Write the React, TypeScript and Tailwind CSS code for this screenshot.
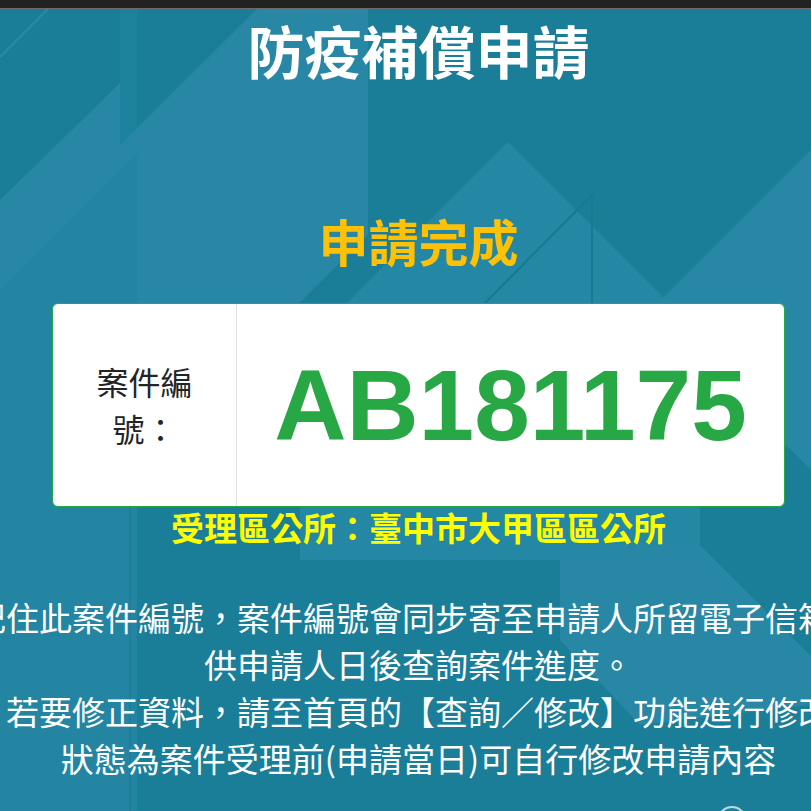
const cjk = { fontFamily: '"Noto Sans CJK TC", "Noto Sans", sans-serif' };

const notes = [
  "記住此案件編號，案件編號會同步寄至申請人所留電子信箱，",
  "供申請人日後查詢案件進度。",
  "若要修正資料，請至首頁的【查詢／修改】功能進行修改",
  "狀態為案件受理前(申請當日)可自行修改申請內容",
];

function Backdrop() {
  return (
    <svg className="absolute inset-0" width="811" height="811" viewBox="0 0 811 811">
      <rect width="811" height="811" fill="#1a7e99" />
      <polygon points="0,200 120,83 120,145 257,9 368,9 368,235 130,470 130,811 0,811" fill="#2887a5" />
      <polygon points="120,9 137,9 137,128 120,145" fill="#1d829e" />
      <polygon points="0,290 137,153 137,811 0,811" fill="#2385a2" />
      <polygon points="508,142 700,334 700,560 300,560 300,350" fill="#2487a4" />
      <polygon points="811,150 650,311 811,470" fill="#2887a5" />
      <polygon points="560,545 700,545 811,656 811,705 640,725 560,640" fill="#2887a5" />
      <line x1="0" y1="57" x2="48" y2="9" stroke="#2a8aa8" strokeWidth="2" />
      <line x1="592" y1="195" x2="592" y2="303" stroke="#1a7893" strokeWidth="2" />
      <line x1="592" y1="195" x2="485" y2="303" stroke="#1a7893" strokeWidth="2" />
      <line x1="130" y1="470" x2="130" y2="811" stroke="#1f7f9b" strokeWidth="2" />
    </svg>
  );
}

export default function App() {
  return (
    <div className="relative w-[811px] h-[811px] overflow-hidden bg-[#1a7e99]" style={cjk}>
      <Backdrop />

      {/* top bar */}
      <div className="relative h-[9px] bg-[#222222] border-b border-[#6b6b6b]"></div>

      <div className="relative w-[733px] ml-[52px] pt-[6px] flex flex-col items-center">
        <h1 className="text-[57px] leading-[68px] font-bold text-white">防疫補償申請</h1>

        <h2 className="mt-[127px] text-[50px] leading-[60px] font-bold text-[#ffc107]">申請完成</h2>

        {/* case number card */}
        <div className="mt-[33px] w-full h-[204px] flex bg-white rounded-[6px] border border-[#28a745] overflow-hidden">
          <div className="w-[184px] shrink-0 flex items-center justify-center border-r border-[#dee2e6] text-[32px] leading-[47px] text-[#212529] text-center">
            案件編
            <br />
            號：
          </div>
          <div className="flex-1 flex items-center justify-center">
            <span
              className="text-[100px] leading-none font-bold text-[#28a745]"
              style={{ fontFamily: '"Liberation Sans", Arial, sans-serif' }}
            >
              AB181175
            </span>
          </div>
        </div>

        <p className="text-[33px] leading-[40px] font-bold text-[#ffff00] whitespace-nowrap">
          受理區公所：臺中市大甲區區公所
        </p>

        <div className="mt-[47px] flex flex-col items-center text-white text-[33px] leading-[47px]">
          {notes.map((line) => (
            <p key={line} className="whitespace-nowrap">
              {line}
            </p>
          ))}
        </div>
      </div>

      {/* back-to-top button peeking at the bottom */}
      <div className="absolute left-[717px] top-[806px] w-[30px] h-[30px] rounded-full border-2 border-white/70"></div>
    </div>
  );
}
